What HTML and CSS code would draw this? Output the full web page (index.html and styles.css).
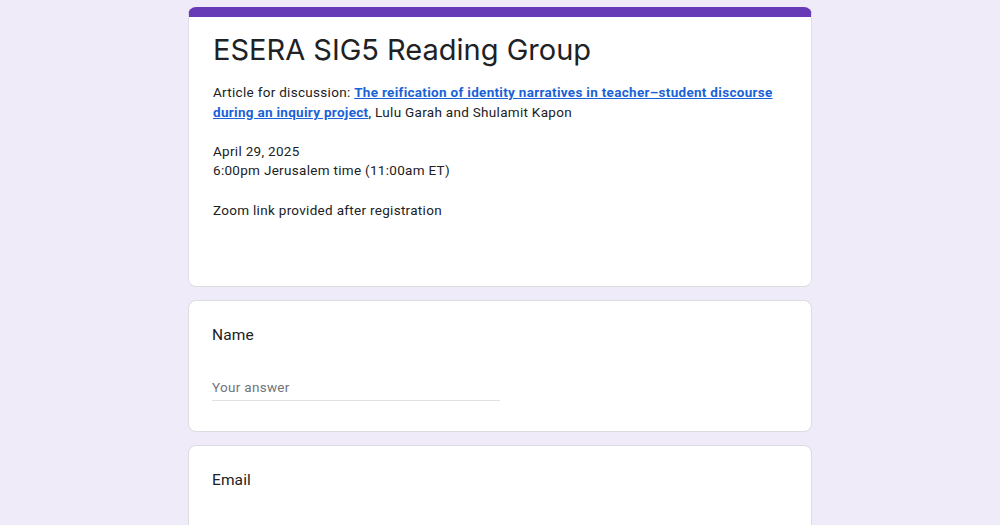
FILE: index.html
```html
<!DOCTYPE html>
<html lang="en">
<head>
<meta charset="utf-8">
<title>ESERA SIG5 Reading Group</title>
<link rel="stylesheet" href="styles.css">
</head>
<body>
<main class="form">
  <section class="card header-card">
    <h1 class="title">ESERA SIG5 Reading Group</h1>
    <div class="desc">
      <p>Article for discussion: <a class="link" href="#">The reification of identity narratives in teacher–student discourse during an inquiry project</a>, Lulu Garah and Shulamit Kapon</p>
      <p>April 29, 2025<br>6:00pm Jerusalem time (11:00am ET)</p>
      <p>Zoom link provided after registration</p>
    </div>
  </section>
  <section class="card question">
    <div class="q-label">Name</div>
    <div class="answer">Your answer</div>
  </section>
  <section class="card question">
    <div class="q-label">Email</div>
    <div class="answer">Your answer</div>
  </section>
</main>
</body>
</html>
```
FILE: styles.css
```css
html, body {
  margin: 0;
  padding: 0;
  background: #f0ebf8;
}
body {
  font-family: Roboto, "Liberation Sans", sans-serif;
  color: #202124;
}
.form {
  width: 624px;
  margin: 7px auto 0;
  display: flex;
  flex-direction: column;
  gap: 13px;
}
.card {
  background: #fff;
  border: 1px solid #dadce0;
  border-radius: 8px;
  box-sizing: border-box;
}
.header-card {
  border-top: 10px solid #673ab7;
  border-left-color: #e3dcee;
  border-right-color: #e3dcee;
  padding: 13px 24px 66px;
}
.title {
  margin: 0;
  font-family: Inter, Roboto, sans-serif;
  font-weight: 400;
  font-size: 29px;
  line-height: 40px;
  letter-spacing: 0;
  color: #202124;
}
.desc {
  margin-top: 13px;
  font-size: 13.5px;
  line-height: 19.6px;
  letter-spacing: 0.3px;
}
.desc p {
  margin: 0 0 19.6px;
}
.desc p:last-child {
  margin-bottom: 0;
}
.link {
  color: #1a62d6;
  font-weight: 700;
  text-decoration: underline;
}
.question {
  padding: 24px 23px 30px;
}
.q-label {
  font-size: 15.5px;
  line-height: 20px;
  letter-spacing: 0.1px;
}
.answer {
  margin-top: 32px;
  width: 288px;
  font-size: 13.5px;
  line-height: 20px;
  letter-spacing: 0.3px;
  color: #70757a;
  padding-bottom: 3px;
  border-bottom: 1px solid #e0e0e0;
}
```
